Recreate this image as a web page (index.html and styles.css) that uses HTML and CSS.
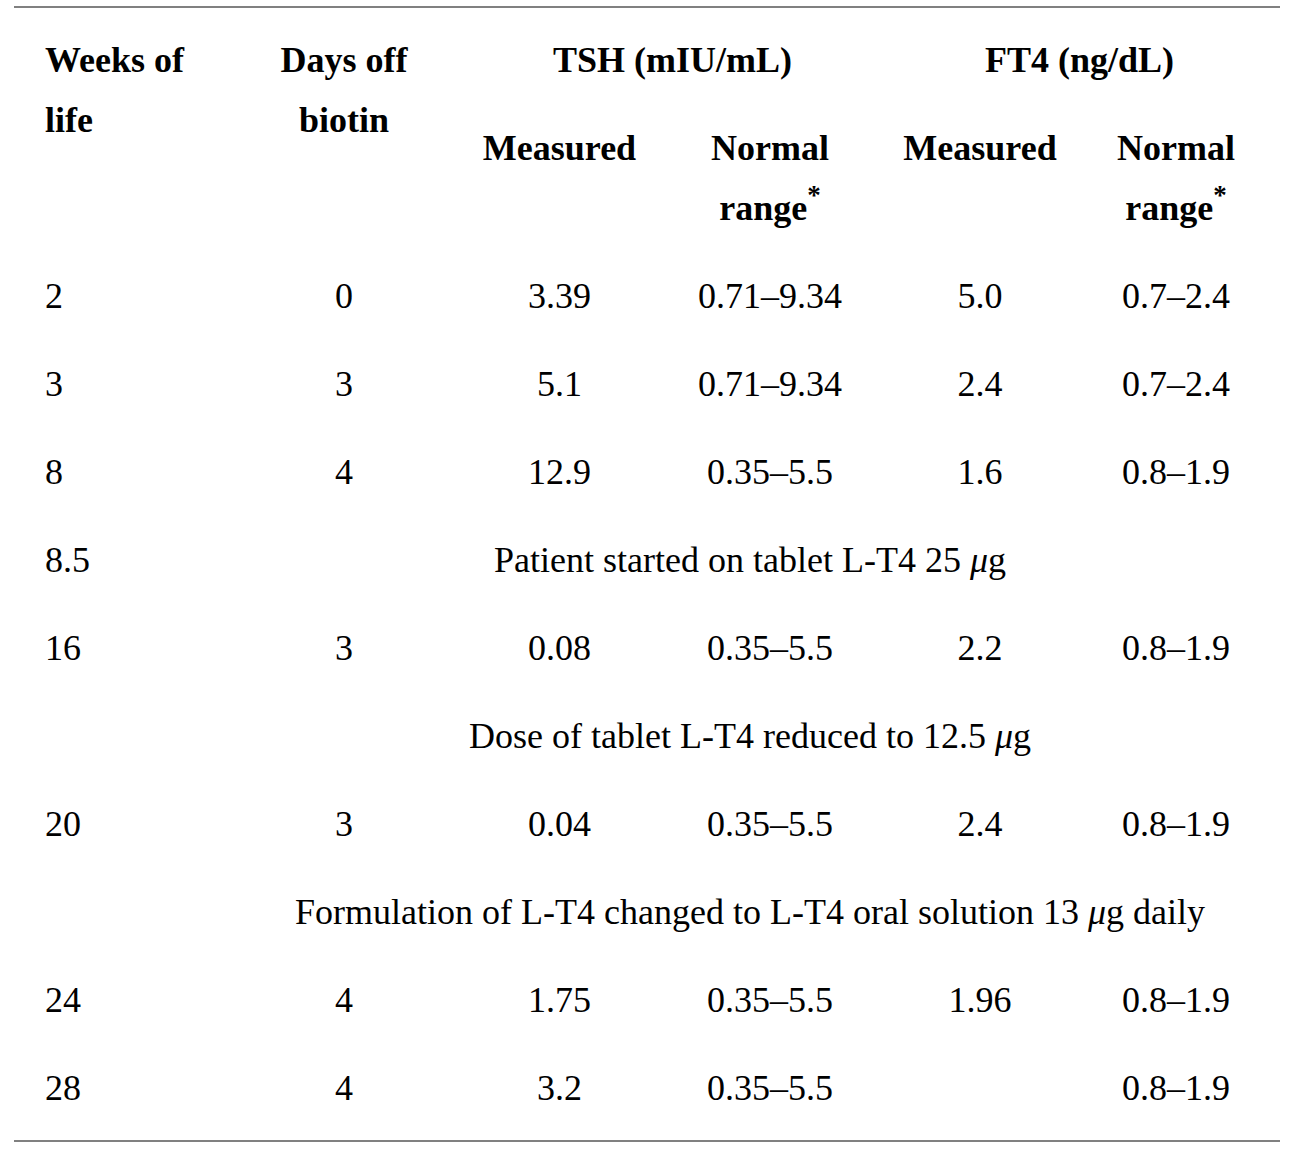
FILE: index.html
```html
<!DOCTYPE html>
<html>
<head>
<meta charset="utf-8">
<link rel="stylesheet" href="styles.css">
</head>
<body>
<div class="wrap">
<table class="tbl">
<colgroup>
<col class="c1"><col class="c2"><col class="c3"><col class="c4"><col class="c5"><col class="c6">
</colgroup>
<thead>
<tr>
<th rowspan="2" class="first">Weeks of<br>life</th>
<th rowspan="2">Days off<br>biotin</th>
<th colspan="2" class="tsh">TSH (mIU/mL)</th>
<th colspan="2">FT4 (ng/dL)</th>
</tr>
<tr>
<th>Measured</th>
<th class="k4">Normal<br>range<sup>*</sup></th>
<th class="k5">Measured</th>
<th class="k6">Normal<br>range<sup>*</sup></th>
</tr>
</thead>
<tbody>
<tr><td class="first">2</td><td>0</td><td>3.39</td><td>0.71–9.34</td><td>5.0</td><td>0.7–2.4</td></tr>
<tr><td class="first">3</td><td>3</td><td>5.1</td><td>0.71–9.34</td><td>2.4</td><td>0.7–2.4</td></tr>
<tr><td class="first">8</td><td>4</td><td>12.9</td><td>0.35–5.5</td><td>1.6</td><td>0.8–1.9</td></tr>
<tr><td class="first">8.5</td><td colspan="5" class="span">Patient started on tablet L-T4 25 <i>μ</i>g</td></tr>
<tr><td class="first">16</td><td>3</td><td>0.08</td><td>0.35–5.5</td><td>2.2</td><td>0.8–1.9</td></tr>
<tr><td class="first"></td><td colspan="5" class="span">Dose of tablet L-T4 reduced to 12.5 <i>μ</i>g</td></tr>
<tr><td class="first">20</td><td>3</td><td>0.04</td><td>0.35–5.5</td><td>2.4</td><td>0.8–1.9</td></tr>
<tr><td class="first"></td><td colspan="5" class="span">Formulation of L-T4 changed to L-T4 oral solution 13 <i>μ</i>g daily</td></tr>
<tr><td class="first">24</td><td>4</td><td>1.75</td><td>0.35–5.5</td><td>1.96</td><td>0.8–1.9</td></tr>
<tr><td class="first">28</td><td>4</td><td>3.2</td><td>0.35–5.5</td><td></td><td>0.8–1.9</td></tr>
</tbody>
</table>
</div>
</body>
</html>
```
FILE: styles.css
```css
html, body {
  margin: 0;
  padding: 0;
  background: #ffffff;
}
body {
  font-family: "Liberation Serif", "Times New Roman", serif;
  color: #000;
}
.wrap {
  margin: 6px 10px 0 14px;
  width: 1266px;
  border-top: 2px solid #808080;
  border-bottom: 2px solid #808080;
  padding: 8px 0;
}
.tbl {
  width: 1266px;
  border-collapse: collapse;
  table-layout: fixed;
  font-size: 36px;
  line-height: 60px;
}
.c1 { width: 220px; }
.c2 { width: 220px; }
.c3 { width: 211px; }
.c4 { width: 214px; }
.c5 { width: 199px; }
.c6 { width: 202px; }
.tbl th, .tbl td {
  padding: 14px 0;
  text-align: center;
  vertical-align: top;
  white-space: nowrap;
}
.tbl th {
  font-weight: bold;
}
.tbl .first {
  text-align: left;
  padding-left: 31px;
}
.tbl .span {
  padding-right: 14px;
}
.tbl .tsh {
  padding-left: 12px;
}
.tbl tbody td:nth-child(4),
.tbl .k4 {
  padding-right: 4px;
}
.tbl tbody td:nth-child(5),
.tbl .k5 {
  padding-left: 3px;
}
.tbl tbody td:nth-child(6),
.tbl .k6 {
  padding-right: 6px;
}
sup {
  font-size: 27px;
  line-height: 0;
  vertical-align: 16px;
}
i {
  font-style: italic;
}
```
